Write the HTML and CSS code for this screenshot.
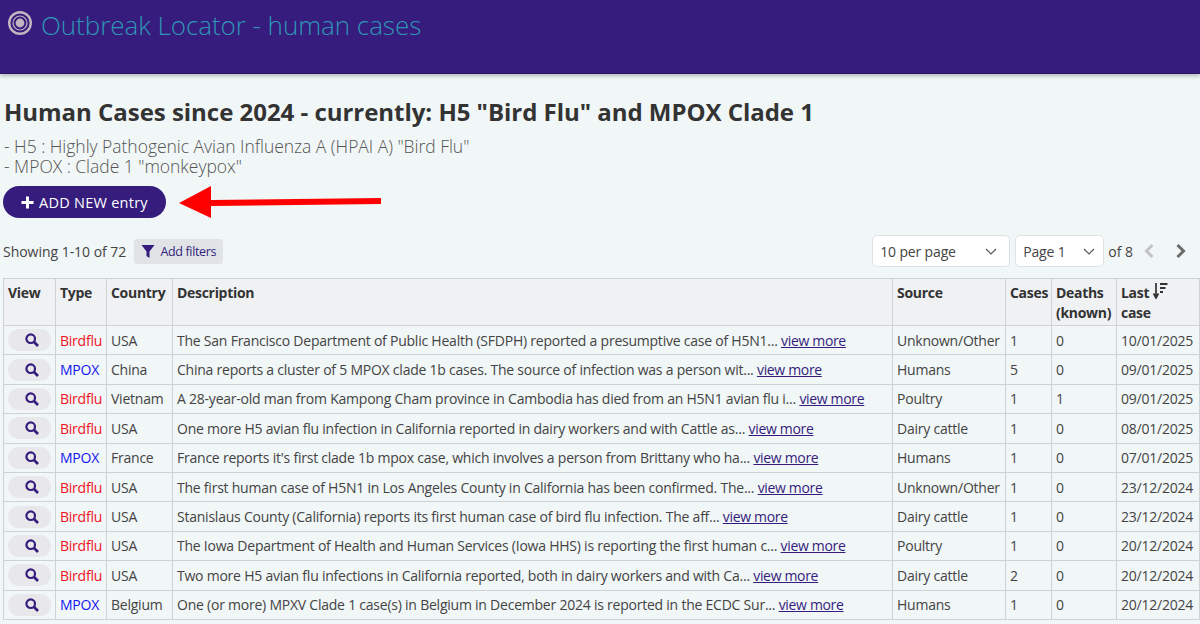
FILE: index.html
```html
<!DOCTYPE html>
<html lang="en">
<head>
  <meta charset="UTF-8">
  <title>Outbreak Locator - human cases</title>
  <link rel="stylesheet" href="styles.css">
</head>
<body>
  <header class="topbar">
    <svg class="logo" width="24" height="24" viewBox="0 0 24 24"><circle cx="12" cy="12" r="10.8" fill="none" stroke="#c4b4c0" stroke-width="2.400"/><circle cx="12" cy="12" r="7" fill="none" stroke="#c4b4c0" stroke-width="1.200"/><circle cx="12" cy="12" r="4.400" fill="#c4b4c0"/></svg>
    <span class="brand">Outbreak Locator - human cases</span>
  </header>

  <main class="content">
    <h1>Human Cases since 2024 - currently: H5 "Bird Flu" and MPOX Clade 1</h1>
    <p class="intro">- H5 : Highly Pathogenic Avian Influenza A (HPAI A) "Bird Flu"<br>- MPOX : Clade 1 "monkeypox"</p>

    <div class="add-row">
      <button class="add-btn">
        <svg width="13" height="13" viewBox="0 0 13 13"><path d="M5 .5h3V5h4.5v3H8v4.5H5V8H.5V5H5z" fill="#fff"/></svg>
        ADD NEW entry
      </button>
      <svg class="arrow" width="204" height="34" viewBox="0 0 204 34"><path d="M1 18 33 1V15L203 13V19L33 21V33z" fill="#f00"/></svg>
    </div>

    <div class="toolbar">
      <span class="showing">Showing 1-10 of 72</span>
      <button class="filter-btn">
        <svg width="14" height="13" viewBox="0 0 14 13"><path d="M.5 0h13L8.5 6.5V13L5.5 11V6.500z" fill="#351c7d"/></svg>
        Add filters
      </button>
      <div class="pager">
        <div class="select per-page">10 per page <svg width="12" height="7" viewBox="0 0 12 7"><path d="M1 1l5 5 5-5" fill="none" stroke="#555" stroke-width="1.100"/></svg></div>
        <div class="select page-no">Page 1 <svg width="12" height="7" viewBox="0 0 12 7"><path d="M1 1l5 5 5-5" fill="none" stroke="#555" stroke-width="1.100"/></svg></div>
        <span class="of">of 8</span>
        <svg class="nav-first" width="12" height="16" viewBox="0 0 12 16"><path d="M9.500 2 3.500 8l6 6" fill="none" stroke="#c2c4c6" stroke-width="3"/></svg>
        <svg class="nav-next" width="12" height="16" viewBox="0 0 12 16"><path d="M2.500 2l6 6-6 6" fill="none" stroke="#6b6b6b" stroke-width="3"/></svg>
      </div>
    </div>

    <table class="cases">
      <colgroup>
        <col class="c-view"><col class="c-type"><col class="c-country"><col class="c-desc"><col class="c-source"><col class="c-cases"><col class="c-deaths"><col class="c-last">
      </colgroup>
      <thead>
        <tr>
          <th>View</th><th>Type</th><th>Country</th><th>Description</th><th>Source</th><th>Cases</th><th>Deaths (known)</th>
          <th>Last <svg class="sort" width="15" height="16" viewBox="0 0 15 16"><path d="M3 0v14M.6 10.500 3 15l2.400-4.500" fill="none" stroke="#333" stroke-width="1.700"/><path d="M7 1h7.500M7 5h5.500M7 9h3" stroke="#333" stroke-width="1.800"/></svg> case</th>
        </tr>
      </thead>
      <tbody id="rows"></tbody>
    </table>
  </main>

  <script>
    var data = [
      ["Birdflu", "USA", "The San Francisco Department of Public Health (SFDPH) reported a presumptive case of H5N1...", "Unknown/Other", 1, 0, "10/01/2025"],
      ["MPOX", "China", "China reports a cluster of 5 MPOX clade 1b cases. The source of infection was a person wit...", "Humans", 5, 0, "09/01/2025"],
      ["Birdflu", "Vietnam", "A 28-year-old man from Kampong Cham province in Cambodia has died from an H5N1 avian flu i...", "Poultry", 1, 1, "09/01/2025"],
      ["Birdflu", "USA", "One more H5 avian flu infection in California reported in dairy workers and with Cattle as...", "Dairy cattle", 1, 0, "08/01/2025"],
      ["MPOX", "France", "France reports it's first clade 1b mpox case, which involves a person from Brittany who ha...", "Humans", 1, 0, "07/01/2025"],
      ["Birdflu", "USA", "The first human case of H5N1 in Los Angeles County in California has been confirmed. The...", "Unknown/Other", 1, 0, "23/12/2024"],
      ["Birdflu", "USA", "Stanislaus County (California) reports its first human case of bird flu infection. The aff...", "Dairy cattle", 1, 0, "23/12/2024"],
      ["Birdflu", "USA", "The Iowa Department of Health and Human Services (Iowa HHS) is reporting the first human c...", "Poultry", 1, 0, "20/12/2024"],
      ["Birdflu", "USA", "Two more H5 avian flu infections in California reported, both in dairy workers and with Ca...", "Dairy cattle", 2, 0, "20/12/2024"],
      ["MPOX", "Belgium", "One (or more) MPXV Clade 1 case(s) in Belgium in December 2024 is reported in the ECDC Sur...", "Humans", 1, 0, "20/12/2024"]
    ];
    var lens = '<svg width="14" height="14" viewBox="0 0 14 14"><circle cx="5.700" cy="5.700" r="4.300" fill="none" stroke="#351c7d" stroke-width="2.200"/><path d="M9 9l4 4" stroke="#351c7d" stroke-width="2.600"/></svg>';
    var html = "";
    for (var i = 0; i < data.length; i++) {
      var r = data[i];
      html += '<tr><td><span class="view-btn">' + lens + '</span></td>' +
        '<td class="' + (r[0] === "MPOX" ? "t-mpox" : "t-bird") + '">' + r[0] + '</td>' +
        '<td>' + r[1] + '</td>' +
        '<td>' + r[2] + ' <a href="#">view more</a></td>' +
        '<td>' + r[3] + '</td><td>' + r[4] + '</td><td>' + r[5] + '</td><td>' + r[6] + '</td></tr>';
    }
    document.getElementById("rows").innerHTML = html;
  </script>
</body>
</html>
```

FILE: styles.css
```css
html, body {
  margin: 0;
  padding: 0;
}

body {
  font-family: "Open Sans", "Noto Sans", sans-serif;
  background-color: #f1f6f7;
  color: #444;
  font-size: 14px;
  overflow: hidden;
}

.topbar {
  height: 74px;
  background: #351c7d;
  border-bottom: 1px solid #2b1568;
  box-shadow: 0 2px 4px rgba(0, 0, 0, 0.25);
  padding: 11px 0 0 8px;
  box-sizing: border-box;
  display: flex;
  align-items: flex-start;
  gap: 9px;
}

.brand {
  color: #2f95b5;
  font-size: 26px;
  line-height: 28px;
  font-weight: 300;
  letter-spacing: -0.05px;
}

.content {
  padding: 0 1px 0 3px;
}

h1 {
  margin: 0;
  padding: 23px 0 0 1px;
  font-size: 24px;
  line-height: 30px;
  color: #333;
  font-weight: 700;
  letter-spacing: -0.03px;
}

.intro {
  margin: 9px 0 0 1px;
  font-size: 17.5px;
  line-height: 20px;
  font-weight: 300;
  color: #555;
  letter-spacing: -0.03px;
}

.add-row {
  display: flex;
  align-items: center;
  margin-top: 9px;
  height: 34px;
}

.add-btn {
  width: 163px;
  height: 32px;
  background: #351c7d;
  color: #fff;
  border: none;
  border-radius: 16px;
  font-family: inherit;
  font-size: 14.5px;
  letter-spacing: 0.25px;
  display: flex;
  align-items: center;
  justify-content: center;
  gap: 5px;
}

.arrow {
  margin-left: 12px;
}

.toolbar {
  display: flex;
  align-items: center;
  height: 32px;
  margin-top: 16px;
}

.showing {
  font-size: 14px;
  letter-spacing: -0.03px;
  color: #444;
}

.filter-btn {
  margin-left: 8px;
  width: 89px;
  height: 25px;
  background: #e0e4e6;
  border: none;
  border-radius: 3px;
  color: #351c7d;
  font-family: inherit;
  font-size: 12.5px;
  letter-spacing: -0.35px;
  display: flex;
  align-items: center;
  justify-content: center;
  gap: 5px;
}

.pager {
  margin-left: auto;
  display: flex;
  align-items: center;
}

.select {
  height: 32px;
  box-sizing: border-box;
  background: #fff;
  border: 1px solid #dde2e4;
  border-radius: 5px;
  display: flex;
  align-items: center;
  justify-content: space-between;
  padding: 0 8px 0 7px;
  font-size: 14px;
  letter-spacing: -0.15px;
  color: #444;
}

.per-page {
  width: 138px;
  margin-right: 5px;
  padding-right: 12px;
}

.page-no {
  width: 89px;
}

.of {
  margin-left: 4px;
  letter-spacing: 0;
}

.nav-first {
  margin-left: 10px;
}

.nav-next {
  margin-left: 20px;
  margin-right: 12px;
}

.cases {
  width: 1196px;
  table-layout: fixed;
  border-collapse: collapse;
  margin-top: 11px;
}

.c-view { width: 52px; }
.c-type { width: 51px; }
.c-country { width: 66px; }
.c-desc { width: 720px; }
.c-source { width: 113px; }
.c-cases { width: 46px; }
.c-deaths { width: 65px; }
.c-last { width: 83px; }

th, td {
  border: 1px solid #ced2d5;
  padding: 0 4px;
  text-align: left;
  white-space: nowrap;
  overflow: hidden;
}

th {
  height: 47px;
  background: #f0f1f3;
  color: #333;
  font-weight: 700;
  font-size: 14px;
  line-height: 20px;
  letter-spacing: -0.3px;
  vertical-align: top;
  padding-top: 4px;
  padding-bottom: 2px;
  box-sizing: border-box;
  white-space: normal;
}

td {
  height: 29.4px;
  box-sizing: border-box;
  font-size: 14px;
  letter-spacing: -0.23px;
  color: #444;
}

td a {
  color: #351c7d;
  text-decoration: underline;
  letter-spacing: -0.33px;
}

.t-bird { color: #f0141e; }
.t-mpox { color: #1414f0; }

.view-btn {
  display: flex;
  align-items: center;
  justify-content: center;
  width: 43px;
  height: 22px;
  box-sizing: border-box;
  padding-left: 5px;
  background: #e8e8ea;
  border-radius: 11px;
}

.sort {
  vertical-align: -1px;
}
```
